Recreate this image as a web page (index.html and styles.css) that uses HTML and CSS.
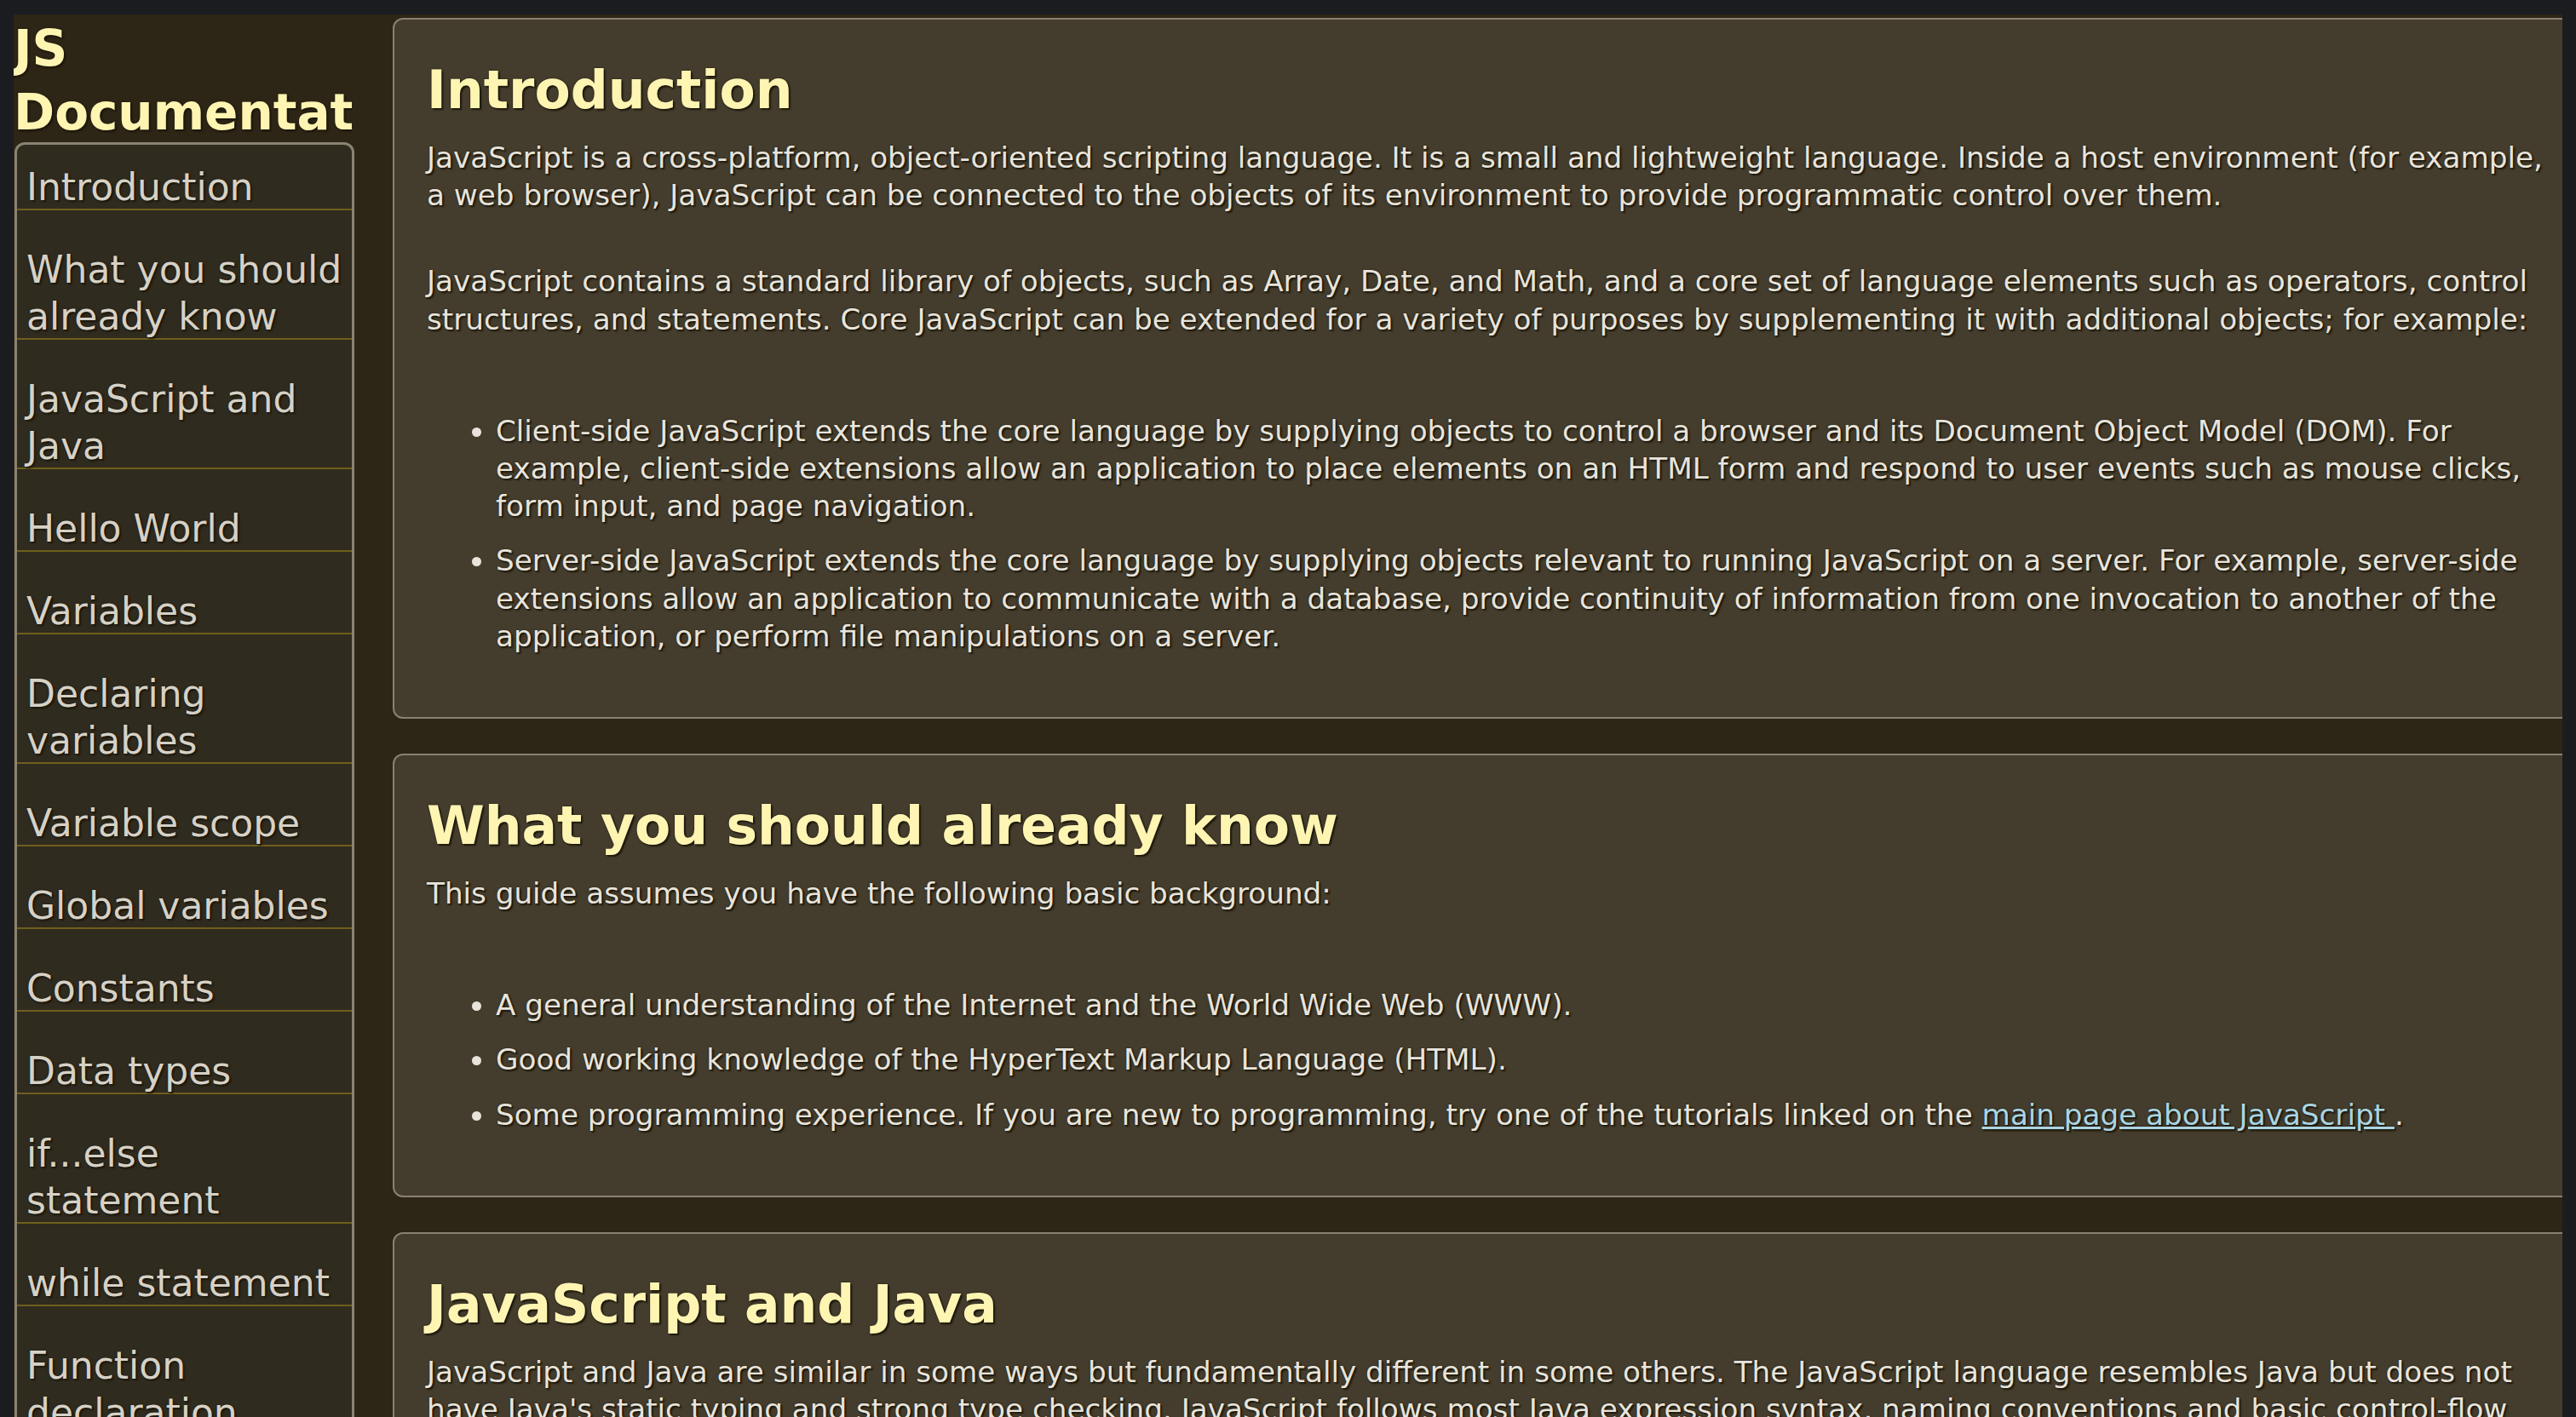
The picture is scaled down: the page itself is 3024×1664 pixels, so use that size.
FILE: index.html
```html
<!DOCTYPE html>
<html lang="en">
<head>
<meta charset="utf-8">
<title>JS Documentation</title>
<link rel="stylesheet" href="styles.css">
</head>
<body>
<nav class="sidebar" id="navbar">
  <header class="nav-header"><h1 class="site-title">JS Documentation</h1></header>
  <ul class="nav-list">
    <li class="nav-item"><a class="nav-link" href="#Introduction">Introduction</a></li>
    <li class="nav-item"><a class="nav-link" href="#What_you_should_already_know">What you should already know</a></li>
    <li class="nav-item"><a class="nav-link" href="#JavaScript_and_Java">JavaScript and Java</a></li>
    <li class="nav-item"><a class="nav-link" href="#Hello_World">Hello World</a></li>
    <li class="nav-item"><a class="nav-link" href="#Variables">Variables</a></li>
    <li class="nav-item"><a class="nav-link" href="#Declaring_variables">Declaring variables</a></li>
    <li class="nav-item"><a class="nav-link" href="#Variable_scope">Variable scope</a></li>
    <li class="nav-item"><a class="nav-link" href="#Global_variables">Global variables</a></li>
    <li class="nav-item"><a class="nav-link" href="#Constants">Constants</a></li>
    <li class="nav-item"><a class="nav-link" href="#Data_types">Data types</a></li>
    <li class="nav-item"><a class="nav-link" href="#if...else_statement">if...else statement</a></li>
    <li class="nav-item"><a class="nav-link" href="#while_statement">while statement</a></li>
    <li class="nav-item"><a class="nav-link" href="#Function_declaration">Function declaration</a></li>
    <li class="nav-item"><a class="nav-link" href="#Reference">Reference</a></li>
  </ul>
</nav>
<main class="main" id="main-doc">
  <section class="card" id="Introduction">
    <h2 class="card-title">Introduction</h2>
    <p class="card-text">JavaScript is a cross-platform, object-oriented scripting language. It is a small and lightweight language. Inside a host environment (for example, a web browser), JavaScript can be connected to the objects of its environment to provide programmatic control over them.</p>
    <p class="card-text">JavaScript contains a standard library of objects, such as Array, Date, and Math, and a core set of language elements such as operators, control structures, and statements. Core JavaScript can be extended for a variety of purposes by supplementing it with additional objects; for example:</p>
    <ul class="card-list">
      <li class="card-item">Client-side JavaScript extends the core language by supplying objects to control a browser and its Document Object Model (DOM). For example, client-side extensions allow an application to place elements on an HTML form and respond to user events such as mouse clicks, form input, and page navigation.</li>
      <li class="card-item">Server-side JavaScript extends the core language by supplying objects relevant to running JavaScript on a server. For example, server-side extensions allow an application to communicate with a database, provide continuity of information from one invocation to another of the application, or perform file manipulations on a server.</li>
    </ul>
  </section>
  <section class="card" id="What_you_should_already_know">
    <h2 class="card-title">What you should already know</h2>
    <p class="card-text">This guide assumes you have the following basic background:</p>
    <ul class="card-list">
      <li class="card-item">A general understanding of the Internet and the World Wide Web (WWW).</li>
      <li class="card-item">Good working knowledge of the HyperText Markup Language (HTML).</li>
      <li class="card-item">Some programming experience. If you are new to programming, try one of the tutorials linked on the <a class="card-link" href="#">main page about JavaScript </a>.</li>
    </ul>
  </section>
  <section class="card" id="JavaScript_and_Java">
    <h2 class="card-title">JavaScript and Java</h2>
    <p class="card-text">JavaScript and Java are similar in some ways but fundamentally different in some others. The JavaScript language resembles Java but does not have Java's static typing and strong type checking. JavaScript follows most Java expression syntax, naming conventions and basic control-flow constructs which was the reason why it was renamed from LiveScript to JavaScript.</p>
    <p class="card-text">In contrast to Java's compile-time system of classes built by declarations, JavaScript supports a runtime system based on a small number of data types representing numeric, Boolean, and string values.</p>
  </section>
</main>
</body>
</html>
```

FILE: styles.css
```css
html {
  background: #1b1c20;
  overflow: hidden;
}

body {
  margin: 17px 16px 0 16px;
  background: #2d2515;
  display: flex;
  align-items: flex-start;
  min-height: calc(100vh - 17px);
  font-family: "DejaVu Sans", Verdana, sans-serif;
}

.sidebar {
  flex: 0 0 400px;
  width: 400px;
}

.site-title {
  margin: 3px 3px -3px 0;
  font-size: 58px;
  line-height: 75px;
  font-weight: bold;
  color: #fff5b3;
  overflow: hidden;
  text-shadow: 0 0 2px #1d180b, 2px 2px 2px #1d180b;
}

.nav-list {
  list-style: none;
  margin: 0 0 0 1px;
  padding: 0;
  border: 3px solid #8a8371;
  border-radius: 12px;
  background: #302b1f;
}

.nav-item {
  padding: 42px 6px 0 11px;
  margin-bottom: -2px;
  border-bottom: 2px solid #6e5f1c;
  font-size: 44px;
  line-height: 55px;
}

.nav-item:first-child {
  padding-top: 20px;
}

.nav-link {
  color: #d6d1c6;
  text-decoration: none;
  line-height: 51px;
  vertical-align: -2px;
  text-shadow: 0 0 2px #1d180b, 2px 2px 2px #1d180b;
}

.main {
  flex: 1 1 0;
  min-width: 0;
  margin: 4px -37px 0 45px;
}

.card {
  display: flex;
  flex-direction: column;
  background: #443d2d;
  border: 2px solid #8a8270;
  border-radius: 12px;
  padding: 43px 38px;
  margin-bottom: 41px;
}

.card-title {
  margin: 0 0 17px;
  font-size: 61.5px;
  line-height: 80px;
  font-weight: bold;
  color: #fff5b3;
  text-shadow: 0 0 2px #1d180b, 2px 2px 2px #1d180b;
}

.card-text {
  margin: 0 0 57px;
  font-size: 34.2px;
  line-height: 44.2px;
  color: #e8e4dc;
  text-shadow: 0 0 2px #1d180b, 2px 2px 2px #1d180b;
}

.card-list {
  margin: 30px 0;
  padding-left: 81px;
  font-size: 34.2px;
  line-height: 44.2px;
  color: #e8e4dc;
  text-shadow: 0 0 2px #1d180b, 2px 2px 2px #1d180b;
}

.card-item + .card-item {
  margin-top: 20px;
}

.card-link {
  color: #aad5e3;
  text-decoration: underline;
}
```
